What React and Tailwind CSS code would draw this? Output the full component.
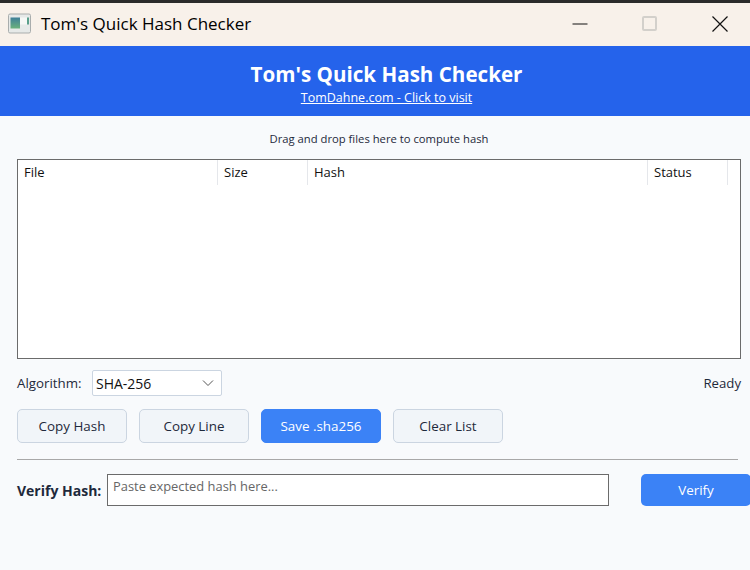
import React from 'react'

const ToolButton = ({ children, primary, wide }) => (
  <button className={`${wide ? 'w-[120px]' : 'w-[110px]'} h-[34px] rounded-[5px] text-[13.4px] border ${primary ? 'bg-[#3b82f6] border-[#3b82f6] text-white' : 'bg-[#f1f5f9] border-[#cbd5e1] text-[#1e293b]'}`}>
    {children}
  </button>
)

const App = () => {
  return (
    <div className="w-[750px] h-[570px] overflow-hidden flex flex-col bg-[#f8fafc] font-['Open_Sans',sans-serif]">
      <div className="h-[3px] bg-[#2b2b2b]"></div>

      {/* title bar */}
      <div className="h-[43px] bg-[#f8f1ea] flex items-center pl-[8px] pb-[2px] text-black">
        <svg width="24" height="24" viewBox="0 0 24 24" className="mr-[9px]">
          <defs>
            <linearGradient id="appIcon" x1="0" y1="0" x2="0" y2="1">
              <stop offset="0" stopColor="#3f7f98" />
              <stop offset="1" stopColor="#6bb27c" />
            </linearGradient>
          </defs>
          <rect x="0.5" y="2" width="22" height="19" rx="1.5" fill="#e6e9e8" stroke="#a9adad" />
          <rect x="2.5" y="5.5" width="9.5" height="11" fill="url(#appIcon)" />
          <rect x="12" y="5.5" width="7" height="7" fill="#f6f8f6" />
          <rect x="19" y="5.5" width="2" height="7" fill="#5aa08c" />
        </svg>
        <span className="text-[17px]">Tom's Quick Hash Checker</span>
        <div className="ml-auto flex items-center">
          <svg width="16" height="16" viewBox="0 0 16 16" className="mr-[54px]">
            <path d="M0.5 8h15" stroke="#111" strokeWidth="1" />
          </svg>
          <div className="w-[15px] h-[15px] border-2 border-[#d3d0cb] rounded-[2px] mr-[55px]"></div>
          <svg width="16" height="16" viewBox="0 0 16 16" className="mr-[22px]">
            <path d="M0.5 0.5l15 15M15.5 0.5l-15 15" stroke="#111" strokeWidth="1.2" />
          </svg>
        </div>
      </div>

      {/* header */}
      <div className="h-[70px] bg-[#2563eb] flex flex-col items-center text-white pl-[23px]">
        <div className="text-[20.6px] font-bold leading-[28px] mt-[14px]">Tom's Quick Hash Checker</div>
        <a className="text-[12.5px] underline leading-[18px] mt-[1px]">TomDahne.com - Click to visit</a>
      </div>

      {/* body */}
      <div className="flex-1 flex flex-col pl-[17px]">
        <div className="w-[724px] text-[11.25px] text-[#1e293b] text-center leading-[16px] mt-[15px] whitespace-nowrap">Drag and drop files here to compute hash</div>

        <div className="h-[200px] w-[724px] mt-[12px] bg-white border border-[#6b6b6b]">
          <div className="flex h-[25px] text-[13px] text-[#111] items-center">
            <div className="w-[200px] h-full pl-[6px] pt-[1px] flex items-center border-r border-[#e5e7eb]">File</div>
            <div className="w-[90px] h-full pl-[6px] pt-[1px] flex items-center border-r border-[#e5e7eb]">Size</div>
            <div className="w-[340px] h-full pl-[6px] pt-[1px] flex items-center border-r border-[#e5e7eb]">Hash</div>
            <div className="w-[80px] h-full pl-[6px] pt-[1px] flex items-center border-r border-[#e5e7eb]">Status</div>
          </div>
        </div>

        <div className="flex items-center w-[724px] mt-[11px] h-[26px]">
          <span className="w-[75px] text-[13.3px] text-[#1e293b] translate-y-[1px]">Algorithm:</span>
          <div className="w-[130px] h-[26px] bg-white border border-[#cbd5e1] rounded-[2px] flex items-center pl-[3px] pr-[7px] text-[14px] text-[#111]">
            <span>SHA-256</span>
            <svg width="12" height="8" viewBox="0 0 12 8" className="ml-auto">
              <path d="M1 1.5l5 5 5-5" fill="none" stroke="#555" strokeWidth="1" />
            </svg>
          </div>
          <span className="ml-auto text-[13.2px] text-[#1e293b] translate-y-[1px]">Ready</span>
        </div>

        <div className="flex gap-[12px] mt-[13px]">
          <ToolButton>Copy Hash</ToolButton>
          <ToolButton>Copy Line</ToolButton>
          <ToolButton primary wide>Save .sha256</ToolButton>
          <ToolButton>Clear List</ToolButton>
        </div>

        <div className="h-px w-[721px] bg-[#a8a8a8] mt-[16px]"></div>

        <div className="flex items-center mt-[14px]">
          <span className="w-[90px] shrink-0 text-[14px] font-bold text-[#1e293b] whitespace-nowrap">Verify Hash:</span>
          <div className="w-[502px] h-[32px] shrink-0 bg-white border border-[#6b6b6b] pl-[5px] text-[12.9px] leading-[22px] text-[#666] whitespace-nowrap">Paste expected hash here...</div>
          <button className="ml-[32px] w-[110px] h-[32px] shrink-0 rounded-[5px] bg-[#3b82f6] text-white text-[13.4px]">Verify</button>
        </div>
      </div>
    </div>
  )
}

export default App
